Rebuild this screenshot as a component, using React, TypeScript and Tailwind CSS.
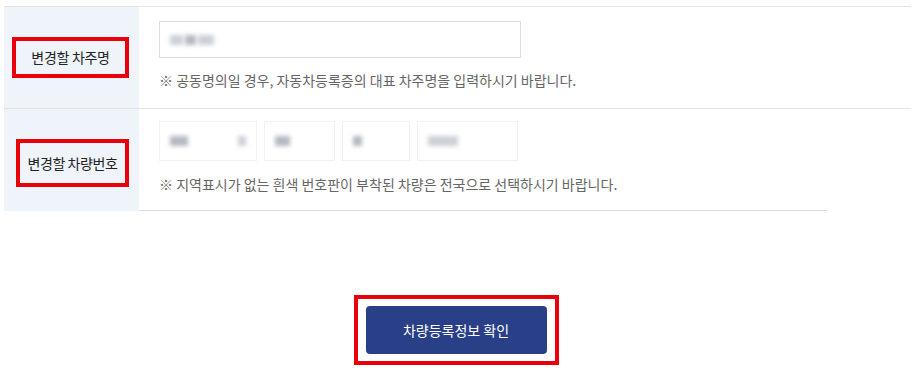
import React from "react";

const font = { fontFamily: '"Noto Sans CJK KR", "Noto Sans", sans-serif' };

function Blur({ w, shade = "bg-gray-400" }: { w: string; shade?: string }) {
  return <span className={`inline-block h-[10px] ${w} ${shade} blur-[2px] opacity-50`} />;
}

export default function App() {
  return (
    <div className="w-[921px] h-[368px] bg-white relative overflow-hidden" style={font}>
      <div className="pt-[6px] pl-[4px]">
        <div className="w-[907px] border-t border-[#e3e3e3]">
          {/* Row 1 */}
          <div className="flex h-[102px] border-b border-[#e3e3e3]">
            <div className="w-[135px] bg-[#eef4fa] flex items-center pl-[8px]">
              <div className="w-[117px] h-[41px] border-[4px] border-[#e8000b] flex items-center justify-center text-[14px] text-[#222] tracking-[-0.3px]">
                변경할 차주명
              </div>
            </div>
            <div className="flex-1 pl-[20px] pt-[14px]">
              <div className="w-[362px] h-[37px] border border-[#dcdcdc] flex items-center pl-[10px] gap-[2px]">
                <Blur w="w-[13px]" />
                <Blur w="w-[11px]" shade="bg-gray-500" />
                <Blur w="w-[16px]" />
              </div>
              <p className="mt-[15px] text-[14px] text-[#666] leading-none">
                ※ 공동명의일 경우, 자동차등록증의 대표 차주명을 입력하시기 바랍니다.
              </p>
            </div>
          </div>
          {/* Row 2 */}
          <div className="flex h-[102px]">
            <div className="w-[135px] bg-[#eef4fa] flex items-center pl-[12px] pt-[6px]">
              <div className="w-[113px] h-[48px] border-[4px] border-[#e8000b] flex items-center justify-center text-[14px] text-[#222] tracking-[-0.4px]">
                변경할 차량번호
              </div>
            </div>
            <div className="flex-1 pl-[20px] pt-[12px] border-b border-[#dcdcdc] mr-[84px]">
              <div className="flex gap-[7px]">
                <div className="w-[98px] h-[40px] border border-[#f1f1f1] flex items-center justify-between px-[10px]">
                  <Blur w="w-[18px]" shade="bg-gray-500" />
                  <Blur w="w-[8px]" />
                </div>
                <div className="w-[71px] h-[40px] border border-[#f1f1f1] flex items-center px-[10px]">
                  <Blur w="w-[15px]" shade="bg-gray-500" />
                </div>
                <div className="w-[68px] h-[40px] border border-[#f1f1f1] flex items-center px-[10px]">
                  <Blur w="w-[9px]" shade="bg-gray-500" />
                </div>
                <div className="w-[101px] h-[40px] border border-[#f1f1f1] flex items-center px-[10px]">
                  <Blur w="w-[30px]" />
                </div>
              </div>
              <p className="mt-[16px] text-[14px] text-[#666] leading-none">
                ※ 지역표시가 없는 흰색 번호판이 부착된 차량은 전국으로 선택하시기 바랍니다.
              </p>
            </div>
          </div>
        </div>
      </div>
      {/* Button */}
      <div className="flex justify-center mt-[84px] pr-[9px]">
        <div className="border-[4px] border-[#e8000b] px-[8px] py-[7px]">
          <button className="w-[181px] h-[48px] rounded-[4px] bg-[#293f87] text-white text-[14px]">
            차량등록정보 확인
          </button>
        </div>
      </div>
    </div>
  );
}
